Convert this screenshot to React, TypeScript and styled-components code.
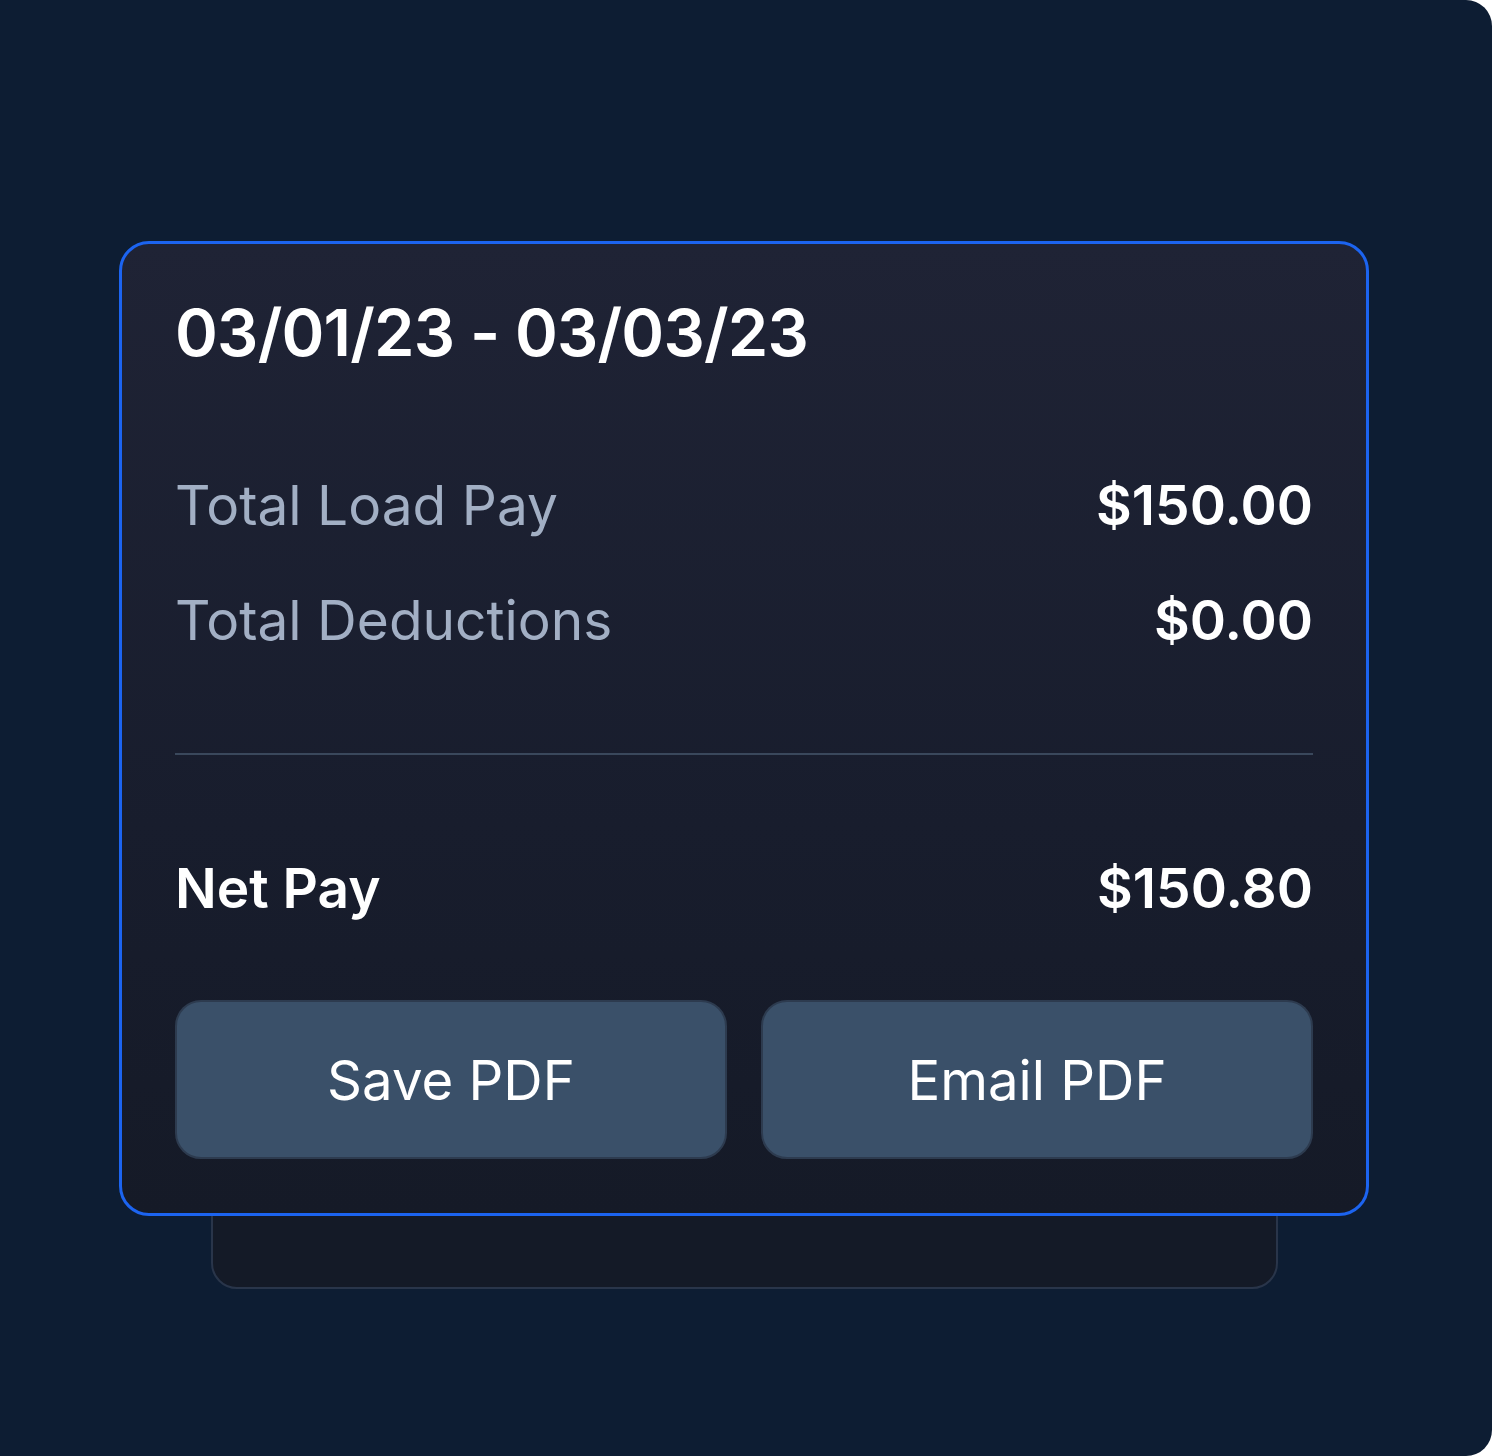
import styled, { createGlobalStyle } from 'styled-components';

const GlobalStyle = createGlobalStyle`
  html, body {
    margin: 0;
    padding: 0;
    background: #ffffff;
  }
  body {
    font-family: Inter, "Noto Sans", "Liberation Sans", sans-serif;
  }
`;

const Panel = styled.div`
  width: 1492px;
  height: 1456px;
  background: #0d1d33;
  border-radius: 0 26px 26px 0;
  padding: 241px 0 0 119px;
  box-sizing: border-box;
`;

const Stack = styled.div`
  position: relative;
  width: 1250px;
`;

const BackCard = styled.div`
  position: absolute;
  left: 92px;
  right: 91px;
  bottom: -73px;
  height: 200px;
  background: #141a27;
  border: 2px solid #29354a;
  border-radius: 26px;
`;

const Card = styled.div`
  position: relative;
  height: 975px;
  box-sizing: border-box;
  border: 3px solid #1c64f0;
  border-radius: 30px;
  background: linear-gradient(180deg, #1f2335 0%, #181d2d 60%, #151a27 100%);
  padding: 49px 53px 0 53px;
  display: flex;
  flex-direction: column;
`;

const Title = styled.h1`
  margin: 0;
  font-size: 65px;
  line-height: 80px;
  font-weight: 600;
  color: #ffffff;
  letter-spacing: -0.8px;
`;

const Rows = styled.div`
  margin-top: 97px;
  display: flex;
  flex-direction: column;
  gap: 45px;
`;

const Row = styled.div`
  display: flex;
  justify-content: space-between;
  align-items: baseline;
  font-size: 55px;
  line-height: 70px;
`;

const Label = styled.span<{ $strong?: boolean }>`
  color: ${({ $strong }) => ($strong ? '#ffffff' : '#a2afc4')};
  font-weight: ${({ $strong }) => ($strong ? 600 : 400)};
`;

const Value = styled.span`
  color: #ffffff;
  font-weight: 600;
`;

const Divider = styled.hr`
  margin: 98px 0 98px;
  border: 0;
  height: 2px;
  background: #3a485c;
`;

const Buttons = styled.div`
  margin-top: 77px;
  display: grid;
  grid-template-columns: 1fr 1fr;
  gap: 34px;
`;

const Button = styled.button`
  height: 159px;
  border: 2px solid #2d3b4f;
  border-radius: 26px;
  background: #3a5069;
  color: #ffffff;
  font-family: Inter, "Noto Sans", "Liberation Sans", sans-serif;
  font-size: 54.5px;
  font-weight: 400;
  cursor: pointer;
`;

const App = () => (
  <>
    <GlobalStyle />
    <Panel>
      <Stack>
        <BackCard />
        <Card>
          <Title>03/01/23 - 03/03/23</Title>
          <Rows>
            <Row>
              <Label>Total Load Pay</Label>
              <Value>$150.00</Value>
            </Row>
            <Row>
              <Label>Total Deductions</Label>
              <Value>$0.00</Value>
            </Row>
          </Rows>
          <Divider />
          <Row>
            <Label $strong>Net Pay</Label>
            <Value>$150.80</Value>
          </Row>
          <Buttons>
            <Button>Save PDF</Button>
            <Button>Email PDF</Button>
          </Buttons>
        </Card>
      </Stack>
    </Panel>
  </>
);

export default App;
